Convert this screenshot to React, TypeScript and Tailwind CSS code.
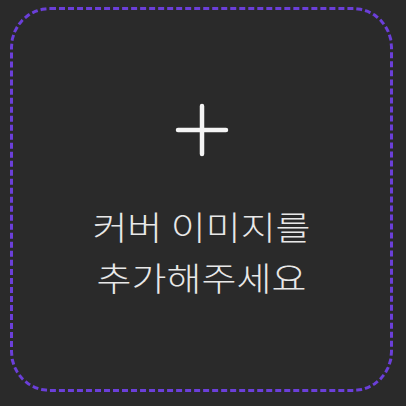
export default function App() {
  return (
    <div className="h-[406px] w-[406px] bg-[#2a2a2a] pl-[10px] pt-[7px]">
      <button
        type="button"
        className="flex h-[385px] w-[383px] flex-col items-center rounded-[40px] border-[3px] border-dashed border-[#6b3fd9] bg-[#2a2a2a] pt-[93px]"
      >
        <svg width="54" height="54" viewBox="0 0 54 54" fill="none">
          <path d="M27 3v48M3 27h48" stroke="#f4f4f4" strokeWidth="4.5" strokeLinecap="round" />
        </svg>
        <p
          className="mt-[43px] origin-top scale-y-[0.88] text-center text-[38px] font-light leading-[58px] text-[#e8e8e8]"
          style={{ fontFamily: '"Noto Sans CJK KR", "Noto Sans", sans-serif' }}
        >
          커버 이미지를
          <br />
          추가해주세요
        </p>
      </button>
    </div>
  )
}
